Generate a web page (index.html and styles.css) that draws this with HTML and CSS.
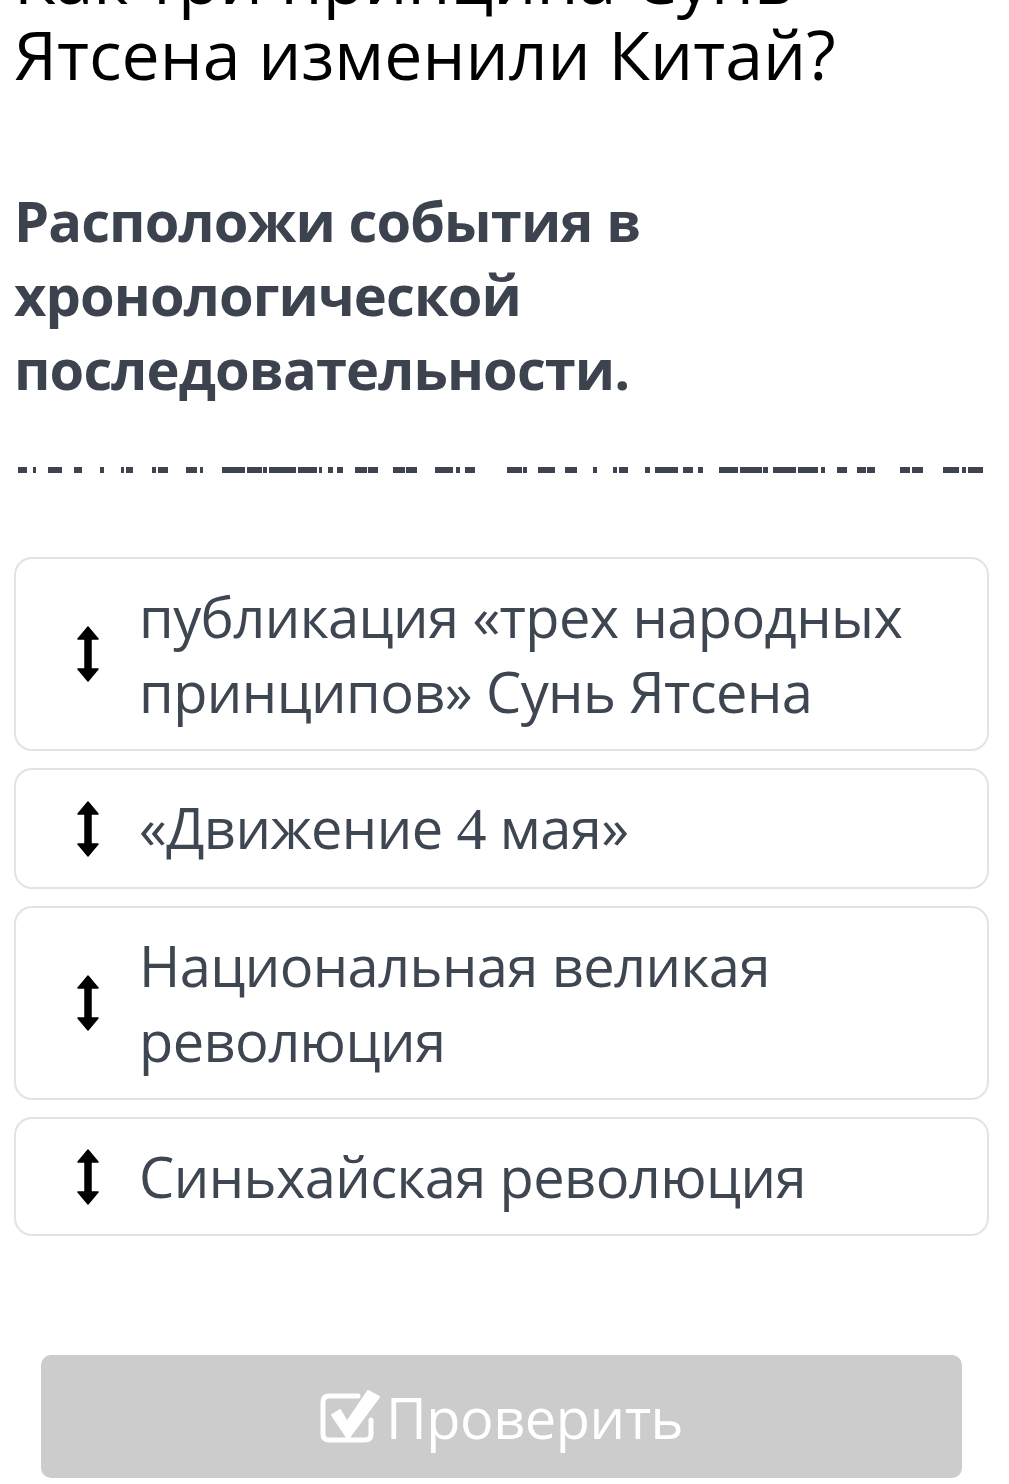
FILE: index.html
```html
<!DOCTYPE html>
<html lang="ru">
  <head>
    <meta charset="UTF-8">
    <title>Как три принципа Сунь Ятсена изменили Китай?</title>
    <link rel="stylesheet" href="styles.css">
  </head>
  <body>
    <div class="page">
      <h1 class="title">Как три принципа Сунь Ятсена изменили Китай?</h1>

      <h2 class="task">Расположи события в хронологической последовательности.</h2>

      <!-- пустая строка под ответ -->
      <svg class="blank" viewBox="0 0 975 6" width="975" height="6">
        <g fill="#3d444f">
          <rect x="4" y="0" width="9" height="6"/><rect x="19" y="0" width="3" height="6"/>
          <rect x="34" y="0" width="14" height="6"/><rect x="60" y="0" width="8" height="6"/>
          <rect x="86" y="0" width="4" height="6"/><rect x="107" y="0" width="3" height="6"/>
          <rect x="112" y="0" width="7" height="6"/><rect x="138" y="0" width="4" height="6"/>
          <rect x="144" y="0" width="10" height="6"/><rect x="172" y="0" width="11" height="6"/>
          <rect x="186" y="0" width="3" height="6"/><rect x="208" y="0" width="23" height="6"/>
          <rect x="233" y="0" width="15" height="6"/><rect x="249" y="0" width="4" height="6"/>
          <rect x="255" y="0" width="27" height="6"/><rect x="284" y="0" width="19" height="6"/>
          <rect x="305" y="0" width="3" height="6"/><rect x="314" y="0" width="5" height="6"/>
          <rect x="323" y="0" width="6" height="6"/><rect x="341" y="0" width="12" height="6"/>
          <rect x="354" y="0" width="10" height="6"/><rect x="379" y="0" width="12" height="6"/>
          <rect x="392" y="0" width="11" height="6"/><rect x="421" y="0" width="18" height="6"/>
          <rect x="442" y="0" width="4" height="6"/><rect x="451" y="0" width="10" height="6"/>
          <rect x="493" y="0" width="15" height="6"/><rect x="509" y="0" width="4" height="6"/>
          <rect x="524" y="0" width="17" height="6"/><rect x="551" y="0" width="12" height="6"/>
          <rect x="579" y="0" width="4" height="6"/><rect x="599" y="0" width="4" height="6"/>
          <rect x="605" y="0" width="9" height="6"/><rect x="631" y="0" width="5" height="6"/>
          <rect x="641" y="0" width="23" height="6"/><rect x="669" y="0" width="10" height="6"/>
          <rect x="684" y="0" width="5" height="6"/><rect x="705" y="0" width="19" height="6"/>
          <rect x="726" y="0" width="22" height="6"/><rect x="749" y="0" width="5" height="6"/>
          <rect x="759" y="0" width="23" height="6"/><rect x="784" y="0" width="20" height="6"/>
          <rect x="807" y="0" width="4" height="6"/><rect x="823" y="0" width="10" height="6"/>
          <rect x="843" y="0" width="9" height="6"/><rect x="853" y="0" width="8" height="6"/>
          <rect x="886" y="0" width="10" height="6"/><rect x="898" y="0" width="11" height="6"/>
          <rect x="929" y="0" width="16" height="6"/><rect x="948" y="0" width="4" height="6"/>
          <rect x="954" y="0" width="15" height="6"/>
        </g>
      </svg>

      <ul class="events">
        <li class="event">
          <svg class="grip" viewBox="0 0 22 56" width="22" height="56"><path d="M11 1 L21 13 H14 V43 H21 L11 55 L1 43 H8 V13 H1 Z" fill="#000" stroke="#000" stroke-width="1.5" stroke-linejoin="round"/></svg>
          <span class="label">публикация «трех народных принципов» Сунь Ятсена</span>
        </li>
        <li class="event">
          <svg class="grip" viewBox="0 0 22 56" width="22" height="56"><path d="M11 1 L21 13 H14 V43 H21 L11 55 L1 43 H8 V13 H1 Z" fill="#000" stroke="#000" stroke-width="1.5" stroke-linejoin="round"/></svg>
          <span class="label">«Движение <span class="num">4</span> мая»</span>
        </li>
        <li class="event">
          <svg class="grip" viewBox="0 0 22 56" width="22" height="56"><path d="M11 1 L21 13 H14 V43 H21 L11 55 L1 43 H8 V13 H1 Z" fill="#000" stroke="#000" stroke-width="1.5" stroke-linejoin="round"/></svg>
          <span class="label">Национальная великая революция</span>
        </li>
        <li class="event">
          <svg class="grip" viewBox="0 0 22 56" width="22" height="56"><path d="M11 1 L21 13 H14 V43 H21 L11 55 L1 43 H8 V13 H1 Z" fill="#000" stroke="#000" stroke-width="1.5" stroke-linejoin="round"/></svg>
          <span class="label">Синьхайская революция</span>
        </li>
      </ul>

      <button class="check" type="button">
        <svg class="check-icon" viewBox="0 0 62 54" width="62" height="54">
          <path d="M38 6 H9 Q3 6 3 12 V44 Q3 50 9 50 H45 Q51 50 51 44 V30" fill="none" stroke="#fff" stroke-width="5" stroke-linecap="round"/>
          <path d="M12 25 L20 20 L27 32 L48 1 L59 7 L28 49 Z" fill="#fff" stroke="#fff" stroke-width="2" stroke-linejoin="round"/>
        </svg>
        <span>Проверить</span>
      </button>
    </div>
  </body>
</html>
```

FILE: styles.css
```css
body, h1, h2, ul, li { margin: 0; padding: 0; }
ul { list-style-type: none; }
body { background: #fff; font-family: "Open Sans", "Noto Sans", sans-serif; color: #3d4550; }

.page { padding: 0 20px 40px 14px; }

.title { max-width: 900px; margin-top: -60px; font-size: 68px; line-height: 76px; font-weight: 400; color: #000; }
.task { margin-top: 91px; font-size: 56px; line-height: 74px; font-weight: 700; letter-spacing: -0.9px; color: #3c434e; }

.blank { display: block; margin-top: 62px; }

.events { display: flex; flex-direction: column; gap: 17px; margin-top: 84px; }
.event { display: flex; align-items: center; padding: 20px 20px 20px 61px; border: 2px solid #e3e3e3; border-radius: 18px; }
.grip { flex: none; margin-right: 40px; }
.label { font-size: 56px; line-height: 75px; letter-spacing: -0.6px; color: #3e4651; }
.num { font-family: "Liberation Serif", serif; font-size: 60px; }

.check { display: flex; align-items: center; justify-content: center; gap: 4px; width: calc(100% - 54px); height: 123px; margin: 119px 27px 0; border: 0; border-radius: 10px; background: #cccccc; color: #fff; font-family: "Open Sans", sans-serif; font-size: 56px; letter-spacing: -0.5px; }
.check-icon { flex: none; }
```
